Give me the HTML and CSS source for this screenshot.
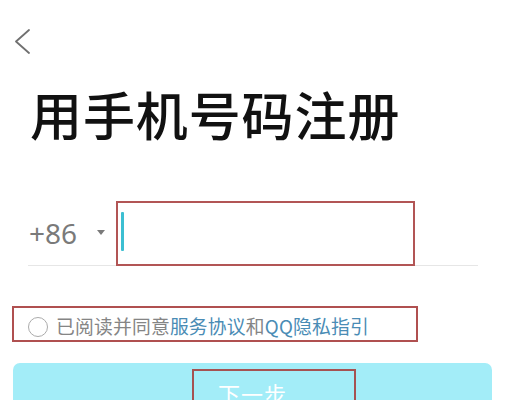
FILE: index.html
```html
<!DOCTYPE html>
<html lang="zh-CN">
<head>
<meta charset="utf-8">
<title>用手机号码注册</title>
<link rel="stylesheet" href="styles.css">
</head>
<body>
<div class="page">
  <div class="topbar">
    <svg class="back" width="16" height="25" viewBox="0 0 16 25" aria-label="返回">
      <polyline points="15,1 2,12.5 15,24" fill="none" stroke="#707070" stroke-width="1.8" stroke-linecap="round" stroke-linejoin="round"/>
    </svg>
  </div>
  <h1 class="title">用手机号码注册</h1>
  <div class="phone-row">
    <span class="code">+86</span>
    <span class="caret-down"></span>
    <div class="input-box"><span class="cursor"></span></div>
  </div>
  <div class="agree">
    <span class="radio"></span>
    <span class="agree-text">已阅读并同意<a class="link">服务协议</a>和<a class="link">QQ隐私指引</a></span>
  </div>
  <div class="btn">
    <span class="btn-text">下一步</span>
    <span class="mark"></span>
  </div>
</div>
</body>
</html>
```
FILE: styles.css
```css
html, body {
  margin: 0;
  padding: 0;
  background: #ffffff;
}
body {
  font-family: "Noto Sans CJK SC", "Noto Sans", sans-serif;
  overflow: hidden;
}
.page {
  width: 505px;
  height: 400px;
  overflow: hidden;
  display: flex;
  flex-direction: column;
}
.topbar {
  padding: 29px 0 0 14px;
  height: 25px;
  flex: none;
}
.back {
  display: block;
}
.title {
  margin: 30px 0 0 30px;
  font-size: 52px;
  line-height: 60px;
  font-weight: 500;
  color: #111111;
  letter-spacing: 0.9px;
  flex: none;
}
.phone-row {
  margin: 57px 27px 0 28px;
  height: 64px;
  border-bottom: 1px solid #e6e6e6;
  display: flex;
  align-items: center;
  flex: none;
}
.code {
  font-family: "Noto Sans", sans-serif;
  font-size: 28px;
  color: #7a7a7a;
  margin-left: 1px;
  width: 68px;
  line-height: 30px;
}
.caret-down {
  width: 0;
  height: 0;
  border-left: 4px solid transparent;
  border-right: 4px solid transparent;
  border-top: 5px solid #7a7a7a;
  margin-top: -2px;
}
.input-box {
  margin-left: 11px;
  width: 295px;
  height: 61px;
  border: 2px solid #b25555;
  align-self: flex-start;
  display: flex;
  align-items: flex-start;
}
.cursor {
  width: 3px;
  height: 39px;
  background: #3cbfd2;
  border-radius: 1px;
  margin: 9px 0 0 3px;
}
.agree {
  margin: 40px 0 0 12px;
  width: 402px;
  height: 32px;
  border: 2px solid #b05050;
  display: flex;
  align-items: center;
  flex: none;
}
.radio {
  width: 18px;
  height: 18px;
  border: 1.5px solid #ababab;
  border-radius: 50%;
  margin: 6px 0 0 14px;
  flex: none;
}
.agree-text {
  margin: 4px 0 0 8px;
  font-size: 18.8px;
  line-height: 24px;
  color: #858585;
  letter-spacing: 0.2px;
}
.link {
  color: #4a8cb5;
  text-decoration: none;
}
.btn {
  position: relative;
  margin: 21px 0 0 13px;
  width: 479px;
  height: 56px;
  background: #a3edf8;
  border-radius: 7px;
  display: flex;
  justify-content: center;
  align-items: flex-start;
  flex: none;
}
.btn-text {
  margin-top: 17px;
  font-size: 22px;
  line-height: 26px;
  color: #ffffff;
  letter-spacing: 1px;
}
.mark {
  position: absolute;
  left: 179px;
  top: 6px;
  width: 160px;
  height: 48px;
  border: 2px solid #a55252;
}
```
